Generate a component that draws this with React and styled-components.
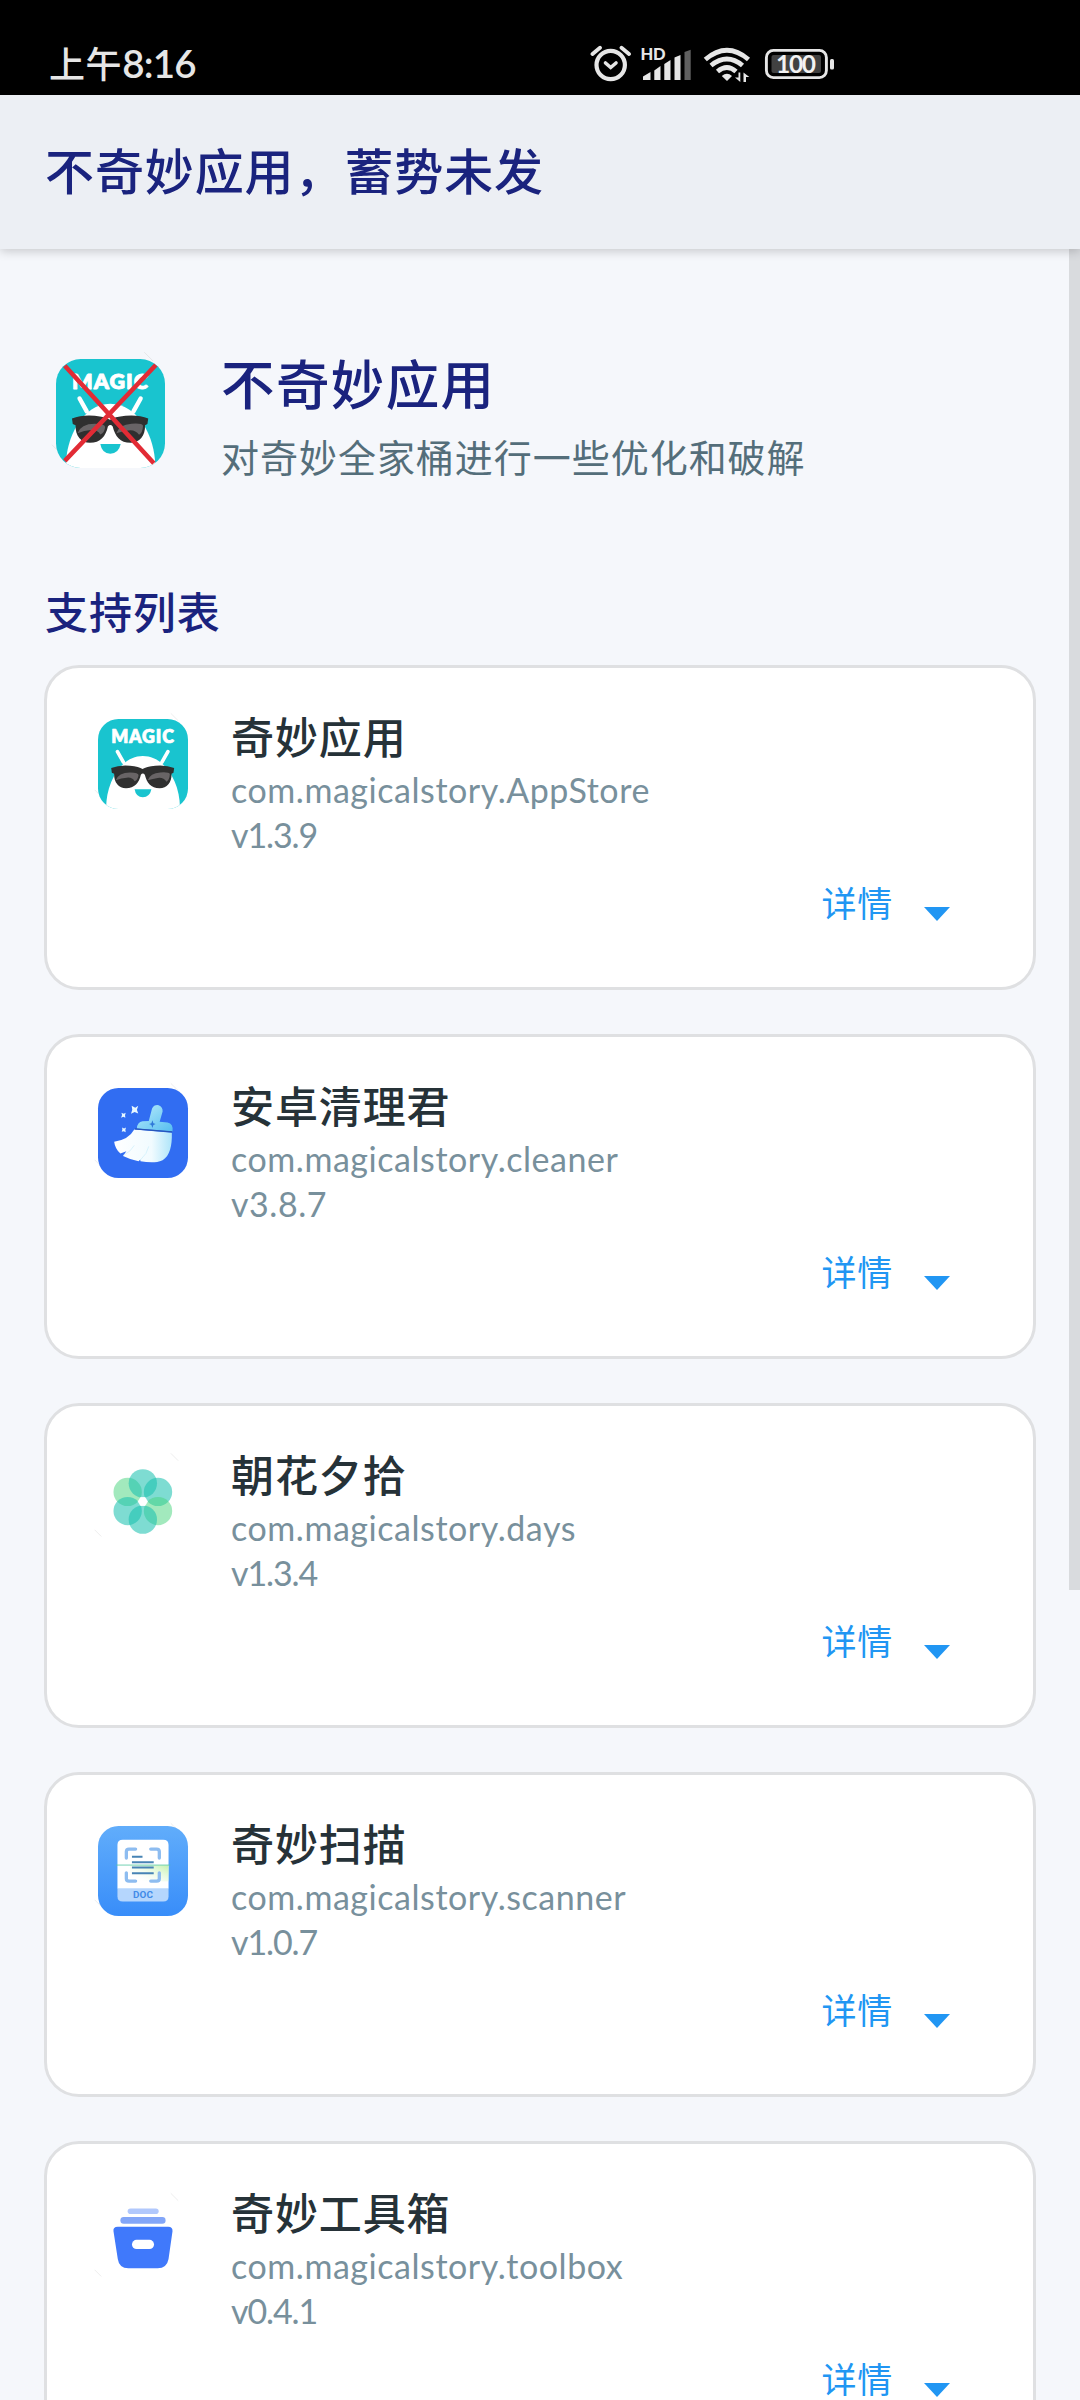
import React from "react";
import styled, { createGlobalStyle } from "styled-components";

const cjk = '"Noto Sans CJK SC", "Noto Sans", sans-serif';
const latin = 'Lato, "Noto Sans CJK SC", sans-serif';

const GlobalStyle = createGlobalStyle`
  *, *::before, *::after { box-sizing: border-box; }
  body { margin: 0; background: #f5f7fb; font-family: ${cjk}; }
`;

const Screen = styled.div`
  position: relative;
  width: 1080px;
  height: 2400px;
  overflow: hidden;
  display: flex;
  flex-direction: column;
  background: #f5f7fb;
`;

const StatusBar = styled.header`
  flex: none;
  height: 95px;
  display: flex;
  align-items: flex-start;
  padding: 40px 0 0 49px;
  background: #000;
`;

const Clock = styled.time`
  width: 541px;
  display: flex;
  align-items: baseline;
  margin-top: -1px;
  font: 500 36px/46px ${cjk};
  letter-spacing: 0.6px;
  color: #e6e6e6;
  white-space: nowrap;
`;

const ClockDigits = styled.span`
  font: 600 38.5px/46px ${latin};
  letter-spacing: -0.8px;
`;

const StatusIcons = styled.svg`
  display: block;
  width: 250px;
  height: 46px;
`;

const AppBar = styled.div`
  flex: none;
  position: relative;
  height: 154px;
  display: flex;
  align-items: center;
  padding: 0 45px 7px;
  background: #eceff4;
  box-shadow: 0 2px 10px rgba(0, 0, 0, 0.2);
`;

const AppBarTitle = styled.h1`
  margin: 0;
  font: 500 49px/70px ${cjk};
  letter-spacing: 0.9px;
  color: #1a237e;
`;

const Content = styled.main`
  flex: 1;
  min-height: 0;
  display: flex;
  flex-direction: column;
  padding: 98px 44px 0;
`;

const Hero = styled.section`
  flex: none;
  display: flex;
  height: 235px;
  padding-left: 12px;
  gap: 56px;
`;

const HeroText = styled.div`
  display: flex;
  flex-direction: column;
  gap: 14px;
`;

const HeroTitle = styled.h2`
  margin: 0;
  font: 500 53.5px/70px ${cjk};
  letter-spacing: 1.4px;
  color: #1a237e;
`;

const HeroSubtitle = styled.p`
  margin: 0;
  font: 400 38px/50px ${cjk};
  letter-spacing: 0.97px;
  color: #546e7a;
`;

const SectionTitle = styled.h3`
  flex: none;
  margin: 0 0 27px 1px;
  font: 500 43px/56px ${cjk};
  letter-spacing: 0.9px;
  color: #1a237e;
`;

const CardList = styled.div`
  flex: none;
  display: flex;
  flex-direction: column;
  gap: 44px;
`;

const Card = styled.article`
  height: 325px;
  display: flex;
  flex-direction: column;
  padding: 39px 83px 0 51px;
  background: #fff;
  border: 3px solid #dfe0e2;
  border-radius: 35px;
`;

const CardTop = styled.div`
  display: flex;
  gap: 43px;
`;

const AppIcon = styled.svg`
  flex: none;
  display: block;
  width: ${(p) => p.$size}px;
  height: ${(p) => p.$size}px;
  margin-top: ${(p) => p.$top}px;
  overflow: visible;
`;

const CardText = styled.div`
  display: flex;
  flex-direction: column;
`;

const AppName = styled.h4`
  margin: 0 0 4px;
  font: 500 43px/56px ${cjk};
  letter-spacing: 0.9px;
  color: #263238;
`;

const Meta = styled.span`
  font: 400 34px/45px ${latin};
  letter-spacing: ${(p) => (p.$tight ? "-1.1px" : "0.55px")};
  color: #78909c;
`;

const Details = styled.button`
  align-self: flex-end;
  display: flex;
  align-items: center;
  gap: 31px;
  margin: 20px 0 0;
  padding: 0;
  border: 0;
  background: none;
  font: 400 35px/50px ${cjk};
  letter-spacing: 0.7px;
  color: #2196f3;
`;

const Caret = styled.span`
  margin-top: 24px;
  border: 13.5px solid transparent;
  border-top: 14px solid #2196f3;
  border-bottom: 0;
`;

const ScrollThumb = styled.div`
  position: absolute;
  top: 249px;
  right: 0;
  width: 11px;
  height: 1341px;
  background: rgba(0, 0, 0, 0.115);
`;

const Streaks = () => (
  <g stroke="#dcdcdc" strokeWidth="2" opacity="0.75">
    <path d="M274 40l22 22M43 272l20 20" />
  </g>
);

const MagicArt = ({ crossed }) => (
  <>
    <clipPath id={crossed ? "magic-a" : "magic-b"}>
      <rect x="53" y="57" width="273" height="273" rx="62" />
    </clipPath>
    <Streaks />
    <g clipPath={`url(#${crossed ? "magic-a" : "magic-b"})`}>
      <rect x="53" y="57" width="273" height="273" fill="#19c4cf" />
      <path d="M78 335C74 262 116 169 189 169S306 262 301 335Z" fill="#fff" />
    </g>
    <text x="188" y="131" textAnchor="middle" textLength="190"
      fontFamily="Lato, sans-serif" fontWeight="800" fontSize="54" fill="#fff" stroke="#fff"
      strokeWidth="2" strokeLinejoin="round">MAGIC</text>
    <path d="M112 156l18 32M265 156l-18 32" stroke="#fff" strokeWidth="11" strokeLinecap="round" />
    <path d="M93 206Q118 196 150 199Q178 202 188 209Q199 202 227 199Q260 196 284 206L282 220L276 223C277 250 262 267 240 267C213 267 201 250 195 226Q189 219 183 226C178 250 164 267 138 267C116 267 101 250 102 223L95 220Z" fill="#2f2f2f" />
    <path d="M107 243Q115 219 150 219Q177 219 176 228Q174 243 164 246Q157 233 140 235Q124 236 107 243ZM204 243Q211 221 242 219Q269 217 271 224Q270 242 261 247Q251 233 234 236Q220 238 204 243Z" fill="#686466" />
    <path d="M164 270H215Q210 294 189 294T164 270Z" fill="#19c4cf" />
    {crossed && <path d="M75 74L298 318M303 72L75 312" stroke="#e22b35" strokeWidth="11.500" />}
  </>
);

const CleanerArt = () => (
  <>
    <defs>
      <linearGradient id="handle" x1="0" y1="0" x2="1" y2="1">
        <stop offset="0" stopColor="#b9ecfb" />
        <stop offset="1" stopColor="#55bdf0" />
      </linearGradient>
      <linearGradient id="brush" x1="0" y1="0" x2="1" y2="0">
        <stop offset="0" stopColor="#fff" />
        <stop offset="0.65" stopColor="#f1fbff" />
        <stop offset="1" stopColor="#aee5f9" />
      </linearGradient>
    </defs>
    <Streaks />
    <rect x="53" y="54" width="273" height="273" rx="62" fill="#316df2" />
    <path d="M171 177Q172 157 188 155L207 154L217 116Q223 104 237 106Q250 111 249 125L240 156L264 159Q282 162 279 186Z" fill="url(#handle)" />
    <path d="M218 152l3 9 7 2-7 3-3 9-3-9-7-3 7-2Z" fill="#2f78d8" />
    <path d="M163 180L277 190C278 230 271 260 249 273C226 283 204 279 182 276L181 271L176 276Q153 272 129 260L139 246L121 253Q105 239 102 217Q146 211 163 180Z" fill="url(#brush)" />
    <path d="M181 273Q203 253 207 231M129 259Q154 246 163 228" fill="none" stroke="#c8edfa" strokeWidth="2" />
    <path d="M165 178L278 187" stroke="#2856b8" strokeWidth="4" />
    <path d="M155 108l11 6 9-6-4 12 4 11-11-4-11 5 4-12ZM124 129l7 3 6-3-2 8 1 7-6-3-7 3 3-8ZM126 174l6 3 6-3-2 7 1 7-6-3-6 2 2-7Z" fill="#e8f8ff" />
  </>
);

const DaysArt = () => (
  <>
    <Streaks />
    <g>
      <circle cx="143" cy="157" r="43" fill="#46d37c" fillOpacity="0.5" />
      <circle cx="235" cy="157" r="43" fill="#19c0ae" fillOpacity="0.56" />
      <circle cx="235" cy="215" r="43" fill="#46d37c" fillOpacity="0.5" />
      <circle cx="143" cy="215" r="43" fill="#19c0ae" fillOpacity="0.56" />
      <circle cx="189" cy="131" r="43" fill="#19c0ae" fillOpacity="0.56" />
      <circle cx="189" cy="241" r="43" fill="#19c0ae" fillOpacity="0.56" />
    </g>
    <path d="M182 174h14l7 12-7 12h-14l-7-12Z" fill="#fff" stroke="#fff" strokeWidth="2" strokeLinejoin="round" />
  </>
);

const ScannerArt = () => (
  <>
    <defs>
      <linearGradient id="scan-bg" x1="0" y1="0" x2="0" y2="1">
        <stop offset="0" stopColor="#61adfb" />
        <stop offset="1" stopColor="#388df9" />
      </linearGradient>
      <linearGradient id="scan-glow" x1="1" y1="0" x2="0.1" y2="0.8">
        <stop offset="0" stopColor="#c3f1ac" />
        <stop offset="1" stopColor="#f4fff0" stopOpacity="0" />
      </linearGradient>
    </defs>
    <Streaks />
    <rect x="53" y="48" width="273" height="273" rx="62" fill="url(#scan-bg)" />
    <path d="M112 238V106Q112 90 128 90H251Q267 90 267 106V238Z" fill="#fff" />
    <path d="M112 238H267V261Q267 277 251 277H128Q112 277 112 261Z" fill="#b5d6fd" />
    <rect x="150" y="167" width="117" height="49" fill="url(#scan-glow)" />
    <path d="M139 145V126Q139 118 147 118H167M213 118H231Q239 118 239 126V145M139 190V208Q139 215 147 215H167M213 215H231Q239 215 239 208V190" fill="none" stroke="#8dbcf0" strokeWidth="10" strokeLinecap="round" />
    <path d="M156 141H188M156 158H222M156 174H222M156 191H222" stroke="#4784b5" strokeWidth="6" />
    <path d="M108 166.500H272" stroke="#56c7a4" strokeWidth="2.500" />
    <text x="189.500" y="267" textAnchor="middle" textLength="60" lengthAdjust="spacingAndGlyphs" fontFamily="Roboto, sans-serif" fontWeight="700" fontSize="29" fill="#428be8">DOC</text>
  </>
);

const ToolboxArt = () => (
  <>
    <Streaks />
    <rect x="143" y="86" width="94" height="17" rx="8.500" fill="#b1c8fc" />
    <rect x="121" y="112" width="137" height="20" rx="10" fill="#83a6f8" />
    <path d="M113 141H266Q280 141 279 155L267 239Q262 267 234 267H145Q117 267 113 239L100 155Q98 141 113 141Z" fill="#4079fb" />
    <rect x="156" y="181" width="67" height="28" rx="14" fill="#fff" />
  </>
);

const apps = [
  { name: "奇妙应用", pkg: "com.magicalstory.AppStore", version: "v1.3.9", art: MagicArt, top: 57 },
  { name: "安卓清理君", pkg: "com.magicalstory.cleaner", version: "v3.8.7", art: CleanerArt, top: 54 },
  { name: "朝花夕拾", pkg: "com.magicalstory.days", version: "v1.3.4", art: DaysArt, top: 51 },
  { name: "奇妙扫描", pkg: "com.magicalstory.scanner", version: "v1.0.7", art: ScannerArt, top: 48 },
  { name: "奇妙工具箱", pkg: "com.magicalstory.toolbox", version: "v0.4.1", art: ToolboxArt, top: 45 },
];

const Indicators = () => (
  <StatusIcons viewBox="590 40 250 46" aria-hidden="true">
    <g fill="none" stroke="#e6e6e6" strokeLinecap="round">
      <circle cx="610.700" cy="65" r="14.200" strokeWidth="4.200" />
      <path d="M592.500 54L600 47.700M629 54L621.500 47.700" strokeWidth="3.800" />
      <path d="M605.500 63L610.700 67.500L616 63" strokeWidth="3.600" />
    </g>
    <text x="640.500" y="60" fontFamily="Lato, sans-serif" fontWeight="900" fontSize="16.500" textLength="25" fill="#e6e6e6">HD</text>
    <g fill="#e6e6e6">
      <path d="M643 80V76.500L650.500 72V80ZM654.300 80V70.500L660.500 66V80ZM664.300 80V64L670.500 60V80ZM674.500 80V57.500L680.500 55V80Z" />
      <path d="M684.500 80V52L690.700 49.700V80Z" fill="#606060" />
    </g>
    <g fill="none" stroke="#e6e6e6" strokeWidth="4.800">
      <path d="M705.300 59.500Q727 41 748.500 59.500" />
      <path d="M711 65.500Q727 52.500 742.500 65.500" />
      <path d="M717.500 71.500Q727 63.500 736 71.500" />
    </g>
    <path d="M721.800 76Q727 71.500 732 76L727 81Z" fill="#e6e6e6" />
    <path d="M740.300 72.500V82L735 77.500H738.500V72.500ZM743.500 82V72.500L749.300 77H746V82Z" fill="#e6e6e6" />
    <rect x="766.400" y="50.400" width="60" height="27.200" rx="7" fill="none" stroke="#e6e6e6" strokeWidth="2.900" />
    <rect x="771.500" y="55" width="49.500" height="18" rx="2" fill="#414141" />
    <rect x="830" y="59" width="4" height="10.500" rx="1.500" fill="#e6e6e6" />
    <text x="796" y="73.200" textAnchor="middle" fontFamily="Lato, sans-serif" fontWeight="700" fontSize="24.500" textLength="40" fill="#f2f2f2">100</text>
  </StatusIcons>
);

const AppCard = ({ name, pkg, version, art: Art, top }) => (
  <Card>
    <CardTop>
      <AppIcon $size={90} $top={12} viewBox={`53 ${top} 273 273`}>
        <Art />
      </AppIcon>
      <CardText>
        <AppName>{name}</AppName>
        <Meta>{pkg}</Meta>
        <Meta $tight={version.includes("1")}>{version}</Meta>
      </CardText>
    </CardTop>
    <Details>
      详情
      <Caret />
    </Details>
  </Card>
);

export default function App() {
  return (
    <>
      <GlobalStyle />
      <Screen>
        <StatusBar>
          <Clock>
            上午<ClockDigits>8:16</ClockDigits>
          </Clock>
          <Indicators />
        </StatusBar>
        <AppBar>
          <AppBarTitle>不奇妙应用，蓄势未发</AppBarTitle>
        </AppBar>
        <Content>
          <Hero>
            <AppIcon $size={109} $top={12} viewBox="53 57 273 273">
              <MagicArt crossed />
            </AppIcon>
            <HeroText>
              <HeroTitle>不奇妙应用</HeroTitle>
              <HeroSubtitle>对奇妙全家桶进行一些优化和破解</HeroSubtitle>
            </HeroText>
          </Hero>
          <SectionTitle>支持列表</SectionTitle>
          <CardList>
            {apps.map((app) => (
              <AppCard key={app.pkg} {...app} />
            ))}
          </CardList>
        </Content>
        <ScrollThumb />
      </Screen>
    </>
  );
}
